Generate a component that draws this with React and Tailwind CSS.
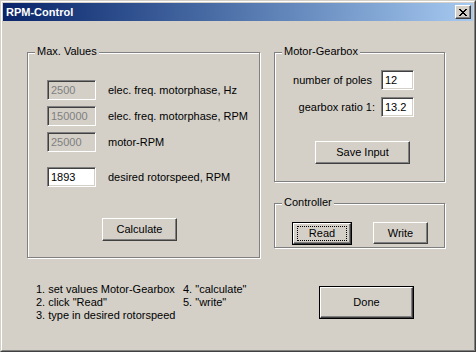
import React from "react";

const font = { fontFamily: '"Liberation Sans", Arial, sans-serif' };

function Group({ label, className, children }) {
  return (
    <div className={"relative border border-[#808080] shadow-[inset_1px_1px_0_#ffffff,1px_1px_0_#ffffff] " + className}>
      <span className="absolute left-[7px] top-[-8px] bg-[#d4d0c8] px-[2px] text-[11px] leading-[13px] text-black">
        {label}
      </span>
      {children}
    </div>
  );
}

function Field({ value, disabled, className }) {
  return (
    <div
      className={
        "flex items-center border border-t-[#808080] border-l-[#808080] border-b-white border-r-white shadow-[inset_1px_1px_0_#404040,inset_-1px_-1px_0_#d4d0c8] pl-[3px] text-[11px] leading-[13px] " +
        (disabled ? "bg-[#d4d0c8] text-[#808080] " : "bg-white text-black ") +
        className
      }
    >
      {value}
    </div>
  );
}

function Button({ children, className }) {
  return (
    <div
      className={
        "flex items-center justify-center border border-t-white border-l-white border-b-[#404040] border-r-[#404040] shadow-[inset_-1px_-1px_0_#808080] text-[11px] leading-[13px] text-black " +
        className
      }
    >
      {children}
    </div>
  );
}

export default function App() {
  return (
    <div style={font} className="w-[476px] h-[352px] border border-t-[#d4d0c8] border-l-[#d4d0c8] border-b-[#404040] border-r-[#404040] bg-[#d4d0c8]">
      <div className="w-full h-full border border-t-white border-l-white border-b-[#808080] border-r-[#808080] p-[1px] flex flex-col">
        {/* title bar */}
        <div className="h-[18px] flex items-center justify-between bg-gradient-to-r from-[#0a246a] to-[#a6caf0] pl-[3px] pr-[2px]">
          <span className="text-white font-bold text-[11px] leading-[13px]">RPM-Control</span>
          <div className="w-[16px] h-[14px] flex items-center justify-center border border-t-white border-l-white border-b-[#404040] border-r-[#404040] shadow-[inset_-1px_-1px_0_#808080] bg-[#d4d0c8]">
            <svg width="8" height="7" viewBox="0 0 8 7">
              <path d="M0 0h2v1h-2zM6 0h2v1h-2zM1 1h2v1h-2zM5 1h2v1h-2zM2 2h4v1h-4zM3 3h2v1h-2zM2 4h4v1h-4zM1 5h2v1h-2zM5 5h2v1h-2zM0 6h2v1h-2zM6 6h2v1h-2z" fill="#000" />
            </svg>
          </div>
        </div>

        {/* client */}
        <div className="flex flex-col">
          <div className="flex pl-[24px] pt-[31px]">
            <Group label="Max. Values" className="w-[233px] h-[206px]">
              <div className="flex flex-col pt-[27px] pl-[19px]">
                <div className="flex items-center">
                  <Field value="2500" disabled className="w-[49px] h-[20px]" />
                  <span className="ml-[12px] text-[11px]">elec. freq. motorphase, Hz</span>
                </div>
                <div className="flex items-center mt-[6px]">
                  <Field value="150000" disabled className="w-[49px] h-[20px]" />
                  <span className="ml-[12px] text-[11px]">elec. freq. motorphase, RPM</span>
                </div>
                <div className="flex items-center mt-[6px]">
                  <Field value="25000" disabled className="w-[49px] h-[20px]" />
                  <span className="ml-[12px] text-[11px]">motor-RPM</span>
                </div>
                <div className="flex items-center mt-[15px]">
                  <Field value="1893" className="w-[49px] h-[20px]" />
                  <span className="ml-[12px] text-[11px]">desired rotorspeed, RPM</span>
                </div>
                <Button className="ml-[55px] mt-[31px] w-[75px] h-[23px]">Calculate</Button>
              </div>
            </Group>

            <div className="flex flex-col ml-[14px]">
              <Group label="Motor-Gearbox" className="w-[171px] h-[130px]">
                <div className="flex flex-col pt-[17px] pr-[30px]">
                  <div className="flex items-center justify-end">
                    <span className="mr-[9px] text-[11px]">number of poles</span>
                    <Field value="12" className="w-[33px] h-[20px]" />
                  </div>
                  <div className="flex items-center justify-end mt-[7px]">
                    <span className="mr-[6px] text-[11px]">gearbox ratio 1:</span>
                    <Field value="13.2" className="w-[33px] h-[20px]" />
                  </div>
                  <Button className="ml-[40px] mt-[24px] w-[95px] h-[23px]">Save Input</Button>
                </div>
              </Group>

              <Group label="Controller" className="w-[171px] h-[45px] mt-[21px]">
                <div className="flex pt-[18px] pl-[17px]">
                  <div className="w-[60px] h-[23px] border border-black">
                    <Button className="w-full h-full">
                      <span className="border border-dotted border-black w-[50px] h-[15px] flex items-center justify-center">Read</span>
                    </Button>
                  </div>
                  <Button className="ml-[21px] w-[55px] h-[22px]">Write</Button>
                </div>
              </Group>
            </div>
          </div>

          <div className="flex mt-[25px]">
            <div className="flex pl-[33px] text-[11px] leading-[13px] text-black">
              <div className="w-[147px] flex flex-col">
                <span>1. set values Motor-Gearbox</span>
                <span>2. click "Read"</span>
                <span>3. type in desired rotorspeed</span>
              </div>
              <div className="flex flex-col">
                <span>4. "calculate"</span>
                <span>5. "write"</span>
              </div>
            </div>
            <div className="ml-auto mr-[59px] mt-[3px] w-[95px] h-[33px] border border-black">
              <Button className="w-full h-full">Done</Button>
            </div>
          </div>
        </div>
      </div>
    </div>
  );
}
